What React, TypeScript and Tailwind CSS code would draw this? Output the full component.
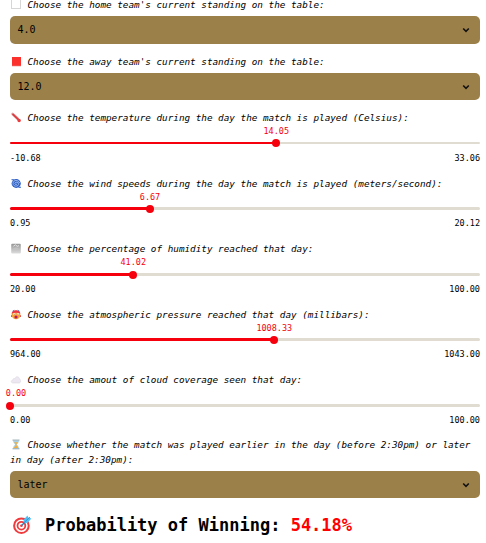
import type { ReactNode } from "react";

const small = "h-[11px] w-[11px] shrink-0";

const WhiteSquare = () => (
  <svg viewBox="0 0 11 11" className={small}><rect x="1.5" y="0.5" width="9" height="9" fill="#fff" stroke="#d6d6d6" /></svg>
);
const RedSquare = () => (
  <svg viewBox="0 0 11 11" className={small}><rect x="2" y="1" width="9" height="9" fill="#fa312d" /><path d="M2 10H11" stroke="#e98a85" strokeWidth=".6" /></svg>
);
const Thermometer = () => (
  <svg viewBox="0 0 11 11" className={small}>
    <path d="M2.6 2L7.6 6.6" stroke="#dcb3b5" strokeWidth="2.8" strokeLinecap="round" />
    <path d="M3 2.4L9 8.2" stroke="#e03a3e" strokeWidth="1.8" strokeLinecap="round" />
    <circle cx="9.1" cy="8.5" r="1.7" fill="#ec3b3f" />
  </svg>
);
const Cyclone = () => (
  <svg viewBox="0 0 11 11" className={small}>
    <ellipse cx="6.2" cy="5.5" rx="4.6" ry="4.4" fill="#2f5fc4" />
    <path d="M1.5 1.7L4 1.8M11 9.2L8.5 9.4" stroke="#2f5fc4" strokeWidth="1" />
    <path d="M9.6 5C8.6 1.6 3.2 1.6 3 5.3C2.9 9 8.7 9 8.7 5.9C8.7 3.6 4.9 3.6 4.9 5.5C4.9 7 7 7 7 5.6" fill="none" stroke="#b4cff5" strokeWidth=".75" />
  </svg>
);
const Fog = () => (
  <svg viewBox="0 0 11 11" className={small}>
    <defs>
      <linearGradient id="fog" x1="0" y1="0" x2="0" y2="1">
        <stop offset="0" stopColor="#989898" />
        <stop offset="1" stopColor="#dcdcdc" />
      </linearGradient>
    </defs>
    <rect x="1.2" y="0.8" width="9.6" height="9.6" rx="1" fill="url(#fog)" />
    <path d="M3.4 3.2L5.5 1.8L7.2 3.4L9 2.6" fill="none" stroke="#e4e4e4" strokeWidth="1" />
    <path d="M3.5 5.2Q6 3.8 8.5 5.4L9.5 7H2.5Z" fill="#c2c2c2" />
  </svg>
);
const HotFace = () => (
  <svg viewBox="0 0 11 11" className={small}>
    <circle cx="6" cy="5.8" r="4.4" fill="#f7a335" />
    <path d="M1.6 4.7C1.8 .2 10.2 .2 10.4 4.7C8.5 3.4 3.5 3.4 1.6 4.7Z" fill="#ed3345" />
    <path d="M2.6 2.2L4.2 1.2M7.8 1.2L9.4 2.2" stroke="#5680d8" strokeWidth="1" />
    <path d="M3.2 5H5.2M6.9 5H8.9" stroke="#fff" strokeWidth="1.4" />
    <path d="M3.9 5.3H4.7M7.5 5.3H8.3" stroke="#5b3a35" strokeWidth=".7" />
    <ellipse cx="6" cy="8.1" rx="1.6" ry="1.5" fill="#b51d60" />
    <path d="M1.5 6.2V8M10.5 6.2V8" stroke="#e65353" strokeWidth="1" />
  </svg>
);
const Cloud = () => (
  <svg viewBox="0 0 11 11" className={small}>
    <path d="M3 9C.8 9 .7 6.2 2.8 6.1C2.8 4.4 4.4 4.1 5 4.7C5.6 1.9 9.2 2.1 9.3 4.8C11.3 5.6 11 9 9.1 9Z" fill="#ece7f0" stroke="#dcd6e1" strokeWidth=".6" />
  </svg>
);
const Hourglass = () => (
  <svg viewBox="0 0 11 11" className={small}>
    <path d="M3 1.5H9C9 4 6.9 4.7 6.9 5.5C6.9 6.3 9 7 9 9.5H3C3 7 5.1 6.3 5.1 5.5C5.1 4.7 3 4 3 1.5Z" fill="#a4d0e9" />
    <path d="M4 3.2H8L6.4 5V6.3L8.2 9H3.8L5.6 6.3V5Z" fill="#f5ad35" />
    <path d="M2.5 1.1H9.5M2.5 9.8H9.5" stroke="#8fa5ae" strokeWidth="1" />
  </svg>
);
const Target = () => (
  <svg viewBox="0 0 20 20" className="h-5 w-5 shrink-0">
    <circle cx="9.4" cy="10.7" r="7.3" fill="#fff" stroke="#f03b3e" strokeWidth="2" />
    <circle cx="9.4" cy="10.7" r="3.9" fill="#fff" stroke="#f03b3e" strokeWidth="1.8" />
    <circle cx="9.4" cy="10.7" r="1.3" fill="#f03b3e" />
    <path d="M9.4 10.7L14.5 5.5" stroke="#2684bd" strokeWidth="1.4" />
    <path d="M11.5 4.7L15.5 .4L16.2 2.6L19.4 3.4L15.4 8L12 7.7Z" fill="#52bdf4" />
    <path d="M12 7.7L18 2" stroke="#268dc8" strokeWidth=".8" />
  </svg>
);

function Label({ icon, children }: { icon: ReactNode; children: ReactNode }) {
  return (
    <div className="flex h-[15px] items-center whitespace-pre text-[9.32px] leading-[15px] text-black italic">
      <span className="mr-[6.5px] flex">{icon}</span>
      <span>{children}</span>
    </div>
  );
}

function Select({ value, className }: { value: string; className: string }) {
  return (
    <div className={`flex items-center justify-between rounded-[5px] bg-[#9c804a] pr-[10px] pl-[7.5px] text-[10px] leading-none text-black ${className}`}>
      <span>{value}</span>
      <svg viewBox="0 0 8 6" className="h-[6px] w-2"><path d="M1.2 1.5L4 4.3L6.8 1.5" fill="none" stroke="#111" strokeWidth="1.6" /></svg>
    </div>
  );
}

type SliderProps = {
  icon: ReactNode; label: string; value: string; min: string; max: string;
  at: number; valueAt?: number; className: string; track?: string; band?: string;
};

function Slider({ icon, label, value, min, max, at, valueAt, className, track = "h-[3px]", band = "h-[13px] pt-[5px]" }: SliderProps) {
  return (
    <div className={`shrink-0 ${className}`}>
      <Label icon={icon}>{label}</Label>
      <div className="flex h-3">
        <span className="-translate-x-1/2 text-[8.5px] leading-3 text-[#f5000c]" style={{ marginLeft: valueAt ?? at }}>{value}</span>
      </div>
      <div className={band}>
        <div className={`relative w-full rounded-full bg-[#e1dcd1] ${track}`}>
          <div className="h-full rounded-full bg-[#f5000c]" style={{ width: at }} />
          <div className="absolute top-1/2 h-2 w-2 -translate-x-1/2 -translate-y-1/2 rounded-full bg-[#f5000c]" style={{ left: at }} />
        </div>
      </div>
      <div className="mt-[2px] flex justify-between text-[8.5px] leading-3 text-black">
        <span>{min}</span><span>{max}</span>
      </div>
    </div>
  );
}

export default function App() {
  return (
    <main className="flex h-[543px] w-[486px] flex-col overflow-hidden bg-white pr-[6px] pl-[10px] font-['DejaVu_Sans_Mono',monospace]">
      <div className="-mt-[3px] shrink-0"><Label icon={<WhiteSquare />}>Choose the home team's current standing on the table:</Label></div>
      <Select value="4.0" className="mt-1 h-7 shrink-0" />
      <div className="mt-[10px] shrink-0"><Label icon={<RedSquare />}>Choose the away team's current standing on the table:</Label></div>
      <Select value="12.0" className="mt-1 h-[27px] shrink-0" />
      <div className="mt-[10px] flex shrink-0 flex-col">
        <Slider className="h-[66px]" track="h-[2px]" icon={<Thermometer />} label="Choose the temperature during the day the match is played (Celsius):" value="14.05" min="-10.68" max="33.06" at={266.3} />
        <Slider className="h-[65px]" band="h-3 pt-1" icon={<Cyclone />} label="Choose the wind speeds during the day the match is played (meters/second):" value="6.67" min="0.95" max="20.12" at={140} />
        <Slider className="h-[66px]" icon={<Fog />} label="Choose the percentage of humidity reached that day:" value="41.02" min="20.00" max="100.00" at={123.3} />
        <Slider className="h-[65px]" band="h-3 pt-1" icon={<HotFace />} label="Choose the atmospheric pressure reached that day (millibars):" value="1008.33" min="964.00" max="1043.00" at={264.3} />
        <Slider className="h-[65px]" icon={<Cloud />} label="Choose the amout of cloud coverage seen that day:" value="0.00" min="0.00" max="100.00" at={0} valueAt={6} />
      </div>
      <Label icon={<Hourglass />}>Choose whether the match was played earlier in the day (before 2:30pm) or later</Label>
      <div className="h-[15px] text-[9.32px] leading-[15px] italic">in day (after 2:30pm):</div>
      <Select value="later" className="mt-1 h-[27px] shrink-0" />
      <h1 className="mt-[15px] ml-[2px] flex h-6 items-center text-[17px] leading-6 font-bold whitespace-pre text-black">
        <Target />
        <span className="ml-[13px]">Probability of Winning: <span className="text-[#ff0000]">54.18%</span></span>
      </h1>
    </main>
  );
}
